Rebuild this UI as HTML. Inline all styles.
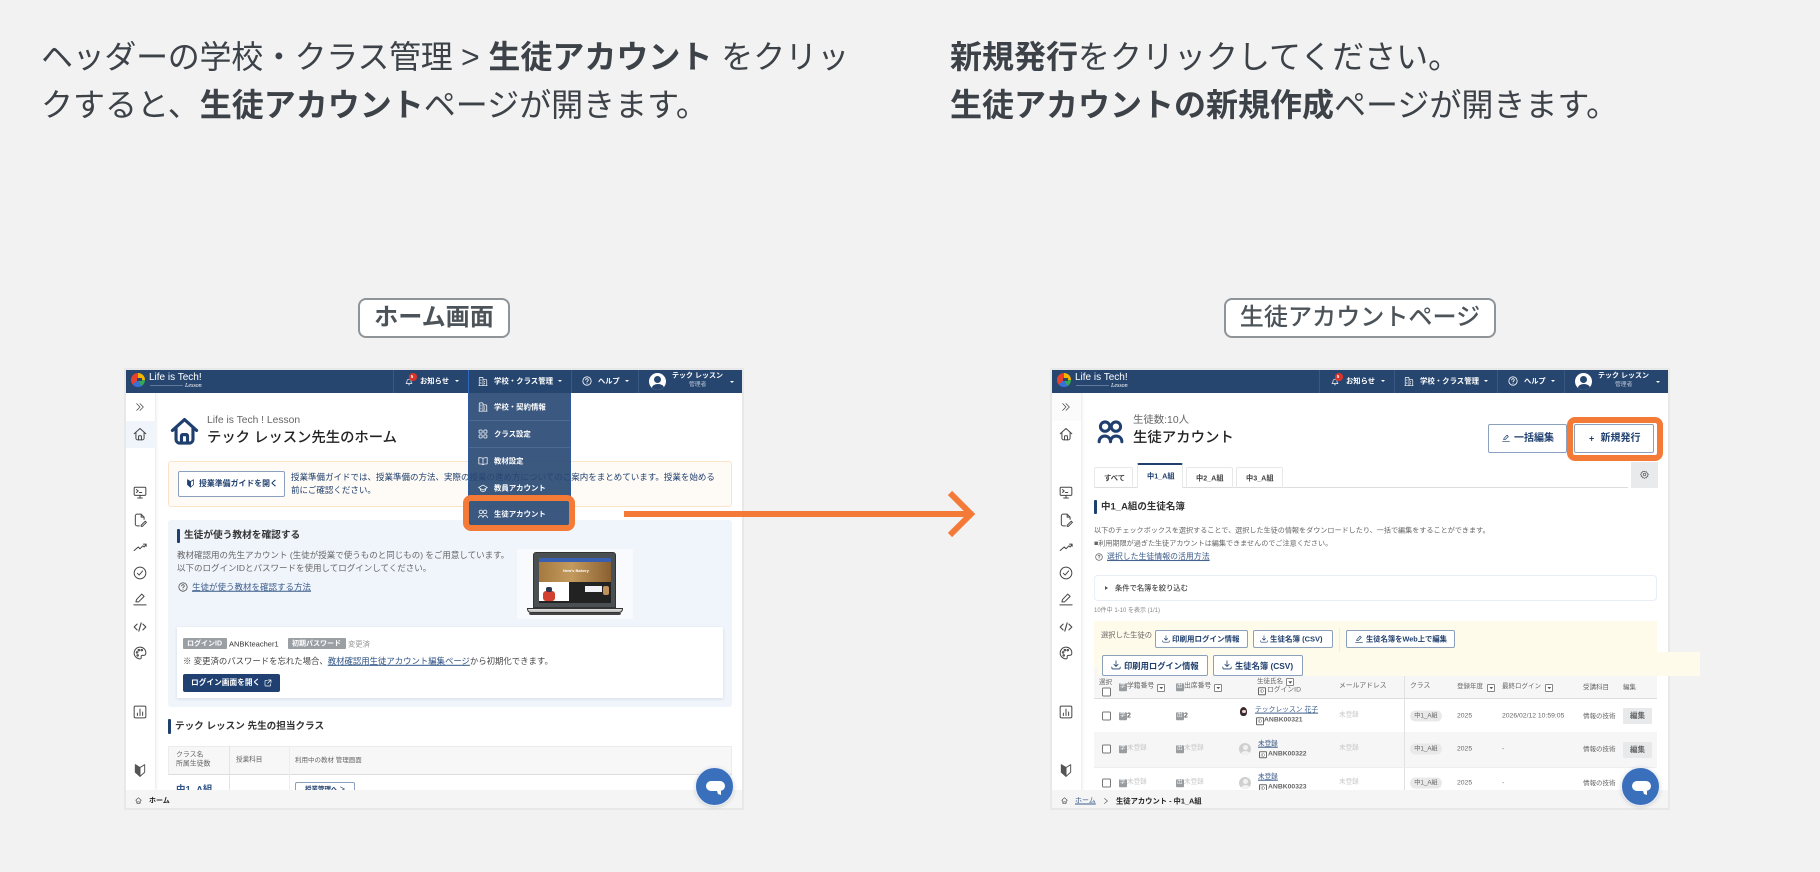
<!DOCTYPE html>
<html lang="ja"><head><meta charset="utf-8"><title>生徒アカウント</title>
<style>
*{box-sizing:border-box}
html,body{margin:0;padding:0}
body{width:1820px;height:872px;background:#f2f2f2;overflow:hidden;position:relative;font-family:"Liberation Sans","Noto Sans CJK JP",sans-serif;color:#3b4046}
.lead{position:absolute;font-size:32px;line-height:48px;white-space:nowrap;color:#3c4248;font-weight:400}
.lead b{font-weight:700}
.label{position:absolute;top:298px;height:40px;background:#fff;border:2px solid #8f9499;border-radius:8px;font-size:24.100px;font-weight:500;color:#4d5459;text-align:center;line-height:35px}
.frame{position:absolute;top:370px;width:616px;height:438px;outline:2px solid #e8e8e8;background:#fff}
.clip{position:absolute;inset:0;overflow:hidden;background:#fff}
.hd{position:absolute;left:0;top:0;width:616px;height:23px;background:#27466f}
.sep{position:absolute;top:0;width:1px;height:23px;background:#3a5881}
.side{position:absolute;left:0;top:23px;width:30px;height:397px;background:#fff;border-right:1px solid #f0f0f0;box-shadow:1px 0 2px #f2f2f2}
.bc{position:absolute;left:0;top:420px;width:616px;height:18px;background:#f5f5f5}
.t{position:absolute;white-space:nowrap;line-height:1;transform:translateY(-50%)}
.w{color:#fff}.b{font-weight:700}.n{color:#1f3f6e}.g{color:#666}.l{color:#c8c8c8}
.u{text-decoration:underline;text-underline-offset:1px;color:#3b5c8a}
svg.i{position:absolute;fill:none;stroke:currentColor;stroke-width:2;stroke-linecap:round;stroke-linejoin:round;overflow:visible}
.car{position:absolute;width:0;height:0;border:2px solid transparent;border-top:2.5px solid #fff;border-bottom:0}
.box{position:absolute;background:#fff;border:1px solid #8ba0bd;border-radius:2px}
.r{position:absolute}
.chat{position:absolute;left:569px;top:397px;width:39px;height:39px;border-radius:50%;background:#3a6fbc;box-shadow:0 1px 4px rgba(0,0,0,.15);border:.5px solid #e8eef8}
.chat:before{content:"";position:absolute;left:10px;top:13px;width:19px;height:10px;border-radius:5px;background:#fff}
.chat:after{content:"";position:absolute;left:21px;top:23px;border:1.500px solid transparent;border-top:3px solid #fff;border-right:3px solid #fff}
.dd{position:absolute;left:342px;top:23px;width:103px;height:134px;background:rgba(40,71,115,.91);border-left:1px solid #2f5a9c;border-right:1px solid #2f5a9c}
.ln{position:absolute;left:0;width:101px;height:1px;background:#4d6a92}
.or{position:absolute;border:6px solid #f47a38;border-radius:8px}
.k{position:absolute;width:7.500px;height:7.500px;background:#9a9da0;color:#fff;font-size:5.500px;line-height:7.500px;text-align:center;border-radius:1px;transform:translateY(-50%)}
.kb{background:#fff;color:#555;border:.7px solid #666;line-height:6px;font-size:4.500px}
.dn{position:absolute;width:8px;height:8px;border:.7px solid #888;border-radius:1px;background:#fff;transform:translateY(-50%)}
.dn:after{content:"";position:absolute;left:1.300px;top:2.200px;width:4px;height:2.500px;background:#555;clip-path:polygon(0 0,100% 0,50% 100%)}
.cb{position:absolute;left:50px;width:9px;height:9px;border:.8px solid #777;border-radius:1.500px;background:#fff;transform:translateY(-50%)}
.pill{position:absolute;left:358px;width:32px;height:11px;border-radius:6px;background:#e9e9e9;color:#666;font-size:6.200px;line-height:11px;text-align:center;transform:translateY(-50%)}
.ed{position:absolute;left:571px;width:29px;height:16px;background:#e8e9ea;color:#666;font-size:7.500px;font-weight:700;line-height:16px;text-align:center;border-radius:1px;transform:translateY(-50%)}
.av{position:absolute;left:187px;width:12px;height:12px;border-radius:50%;background:#cfcfcf;transform:translateY(-50%);overflow:hidden}
.av:before{content:"";position:absolute;left:3.500px;top:2px;width:5px;height:5px;border-radius:50%;background:#f2f2f2}
.av:after{content:"";position:absolute;left:1.500px;top:8px;width:9px;height:7px;border-radius:50%;background:#f2f2f2}
.fx{filter:blur(.3px)}
</style></head>
<body>
<svg width="0" height="0" style="position:absolute">
<symbol id="chev" viewBox="0 0 24 24"><path d="M4 4l8 8-8 8M12 4l8 8-8 8"/></symbol>
<symbol id="home" viewBox="0 0 24 24"><path d="M2 11.500L12 2.500l10 9M5 9v10a3 3 0 0 0 3 3h8a3 3 0 0 0 3-3V9M9.500 22v-6a1 1 0 0 1 1-1h3a1 1 0 0 1 1 1v6"/></symbol>
<symbol id="mon" viewBox="0 0 24 24"><rect x="2" y="3" width="20" height="14" rx="2"/><path d="M12 17v4M8 21.500h8M6 7l3 2.500-3 2.500M11 12h4"/></symbol>
<symbol id="file" viewBox="0 0 24 24"><path d="M14 2H7a3 3 0 0 0-3 3v14a3 3 0 0 0 3 3h4M14 2l5 5v4M14 2v5h5M14 21l7-7 2 2-7 7h-2z"/></symbol>
<symbol id="trend" viewBox="0 0 24 24"><path d="M2 18l7-6 3 3 5-5 2 2 3-4M18 7h4.500v4"/></symbol>
<symbol id="chk" viewBox="0 0 24 24"><circle cx="12" cy="12" r="10"/><path d="M7.500 12.500l3 3 6-7"/></symbol>
<symbol id="pen" viewBox="0 0 24 24"><path d="M5 17l1-4L15 3.500l4 4L9.500 17zM1.500 22h21"/></symbol>
<symbol id="code" viewBox="0 0 24 24"><path d="M7 7l-5 5 5 5M17 7l5 5-5 5M14 5l-4 14"/></symbol>
<symbol id="pal" viewBox="0 0 24 24"><path d="M12 2a10 10 0 0 0 0 20c2 0 2.500-1.500 2-3-.5-2 .5-3 2.500-3h2c2 0 3.500-1.500 3.500-4C22 6 17.500 2 12 2z"/><circle cx="7" cy="11" r="1.300"/><circle cx="10" cy="7" r="1.300"/><circle cx="15" cy="7" r="1.300"/><circle cx="8" cy="16" r="1.300"/></symbol>
<symbol id="chart" viewBox="0 0 24 24"><rect x="2" y="2" width="20" height="20" rx="2"/><path d="M7.500 18v-4M12 18V7M16.500 18v-6"/></symbol>
<symbol id="beg" viewBox="0 0 24 24"><path d="M12 7L4 2v13l8 7z" fill="currentColor"/><path d="M12 7l8-5v13l-8 7z"/></symbol>
<symbol id="bld" viewBox="0 0 24 24"><path d="M3 22V4a2 2 0 0 1 2-2h5a2 2 0 0 1 2 2v18M12 7h7a2 2 0 0 1 2 2v13M2 22h20M7 7v3M7 14v3M16 11v2M16 16v2"/></symbol>
<symbol id="grid" viewBox="0 0 24 24"><rect x="2.500" y="2.500" width="7.500" height="7.500" rx="2"/><rect x="14" y="2.500" width="7.500" height="7.500" rx="2"/><rect x="2.500" y="14" width="7.500" height="7.500" rx="2"/><rect x="14" y="14" width="7.500" height="7.500" rx="2"/></symbol>
<symbol id="book" viewBox="0 0 24 24"><path d="M12 6c-2-2-5-2-10-2v15c5 0 8 0 10 2 2-2 5-2 10-2V4c-5 0-8 0-10 2zM12 6v15"/></symbol>
<symbol id="cap" viewBox="0 0 24 24"><path d="M12 5L1.500 11 12 17l10.500-6zM6 14v4c3 3 9 3 12 0v-4"/></symbol>
<symbol id="ppl" viewBox="0 0 24 24"><circle cx="7" cy="7" r="4.300"/><circle cx="17" cy="7" r="4.300"/><path d="M1.500 21c0-7 10.500-7 10.500 0 0-7 10.500-7 10.500 0"/></symbol>
<symbol id="dl" viewBox="0 0 24 24"><path d="M12 2v13M7 10.500l5 5 5-5M2 17v2a2.500 2.500 0 0 0 2.500 2.500h15A2.500 2.500 0 0 0 22 19v-2"/></symbol>
<symbol id="q" viewBox="0 0 24 24"><circle cx="12" cy="12" r="10"/><path d="M9 9.500a3 3 0 1 1 4.500 2.500c-1 .7-1.500 1.200-1.500 2.500M12 17.500v.2"/></symbol>
<symbol id="gear" viewBox="0 0 24 24"><circle cx="12" cy="12" r="3.500"/><path d="M12 3l2 2 3-.5 1 3 3 1-.5 3 2 .5-2 2 .5 3-3 1-1 3-3-.5-2 2-2-2-3 .5-1-3-3-1 .5-3-2-2 2-2L3 7.500l3-1 1-3 3 .5z"/></symbol>
<symbol id="bell" viewBox="0 0 24 24"><path d="M3 18c2-1 3-3 3-7a6 6 0 0 1 12 0c0 4 1 6 3 7zM10 22h4"/></symbol>
<symbol id="ext" viewBox="0 0 24 24"><path d="M10 4H5a2 2 0 0 0-2 2v13a2 2 0 0 0 2 2h13a2 2 0 0 0 2-2v-5M13 3h8v8M21 3l-10 10"/></symbol>
</svg>

<div class="lead" style="left:41px;top:33px"><span style="letter-spacing:-.3px">ヘッダーの学校・クラス管理 &gt;</span> <b>生徒アカウント</b> をクリッ</div>
<div class="lead" style="left:41px;top:81px">クすると、<b>生徒アカウント</b>ページが開きます。</div>
<div class="lead" style="left:950px;top:33px"><b>新規発行</b>をクリックしてください。</div>
<div class="lead" style="left:950px;top:81px"><b>生徒アカウントの新規作成</b>ページが開きます。</div>

<div class="label" style="left:358px;width:152px;font-weight:700">ホーム画面</div>
<div class="label" style="left:1224px;width:272px">生徒アカウントページ</div>

<!-- FRAME 1 -->
<div class="frame fx" style="left:126px">
<div class="clip">
  <svg class="i n" style="left:44px;top:46px;width:29px;height:30px;stroke-width:2.600"><use href="#home"/></svg>
  <span class="t g" style="left:81px;top:51px;font-size:10.300px;font-weight:500">Life is Tech ! Lesson</span>
  <span class="t" style="left:81px;top:68px;font-size:14.350px;color:#222;font-weight:500">テック レッスン先生のホーム</span>

  <div class="r" style="left:42px;top:91px;width:564px;height:46px;background:#fefaf5;border:1px solid #fbe3c8;border-radius:3px"></div>
  <div class="box" style="left:52px;top:101px;width:107px;height:26px"></div>
  <svg class="i n" style="left:60px;top:109px;width:9px;height:9px"><use href="#beg"/></svg>
  <span class="t b n" style="left:73px;top:114px;font-size:7.900px">授業準備ガイドを開く</span>
  <span class="t n" style="left:165px;top:107px;font-size:8.500px">授業準備ガイドでは、授業準備の方法、実際の授業の進め方についてのご案内をまとめています。授業を始める</span>
  <span class="t n" style="left:165px;top:120px;font-size:8.500px">前にご確認ください。</span>

  <div class="r" style="left:42px;top:150px;width:564px;height:187px;background:#f0f5fb;border-radius:3px"></div>
  <div class="r" style="left:51px;top:159px;width:3px;height:14px;background:#1f3f6e;border-radius:1px"></div>
  <span class="t b" style="left:58px;top:166px;font-size:9.700px;color:#333">生徒が使う教材を確認する</span>
  <span class="t g" style="left:51px;top:185px;font-size:8.500px">教材確認用の先生アカウント (生徒が授業で使うものと同じもの) をご用意しています。</span>
  <span class="t g" style="left:51px;top:198px;font-size:8.500px">以下のログインIDとパスワードを使用してログインしてください。</span>
  <svg class="i" style="left:52px;top:212px;width:10px;height:10px;color:#555"><use href="#q"/></svg>
  <span class="t u" style="left:66px;top:217px;font-size:8.500px">生徒が使う教材を確認する方法</span>

  <div class="r" style="left:391px;top:179px;width:116px;height:70px;background:#f8fafe;border-radius:2px"></div>
  <div class="r" style="left:407px;top:182px;width:83px;height:56px;background:#4a4f52;border-radius:3px 3px 0 0;border:1px solid #333"></div>
  <div class="r" style="left:413px;top:188px;width:72px;height:45px;background:#222"></div>
  <div class="r" style="left:413px;top:188px;width:72px;height:4px;background:#3a5fb0"></div>
  <div class="r" style="left:413px;top:192px;width:72px;height:20px;background:linear-gradient(90deg,#a5793f,#c39a5e 45%,#8a6030)"></div>
  <span class="t b w" style="left:437px;top:201px;font-size:4px">New's Bakery</span>
  <div class="r" style="left:413px;top:212px;width:30px;height:19px;background:#fff"></div>
  <div class="r" style="left:417px;top:221px;width:12px;height:10px;background:#d2402f;border-radius:3px"></div>
  <div class="r" style="left:420px;top:217px;width:6px;height:5px;background:#2a3550;border-radius:2px"></div>
  <div class="r" style="left:459px;top:216px;width:17px;height:6px;background:#f2f2f6"></div>
  <div class="r" style="left:477px;top:216px;width:6px;height:9px;background:#c0935a;border-radius:2px"></div>
  <div class="r" style="left:401px;top:238px;width:96px;height:5px;background:linear-gradient(#e0e0e0,#b8b8b8);border:1px solid #333;border-radius:0 0 4px 4px"></div>
  <div class="r" style="left:403px;top:243px;width:92px;height:2px;background:#444;border-radius:0 0 4px 4px"></div>

  <div class="r" style="left:51px;top:257px;width:546px;height:71px;background:#fff;box-shadow:0 1px 3px rgba(60,80,120,.15)"></div>
  <div class="r" style="left:57px;top:268px;width:44px;height:11px;background:#9a9fa4;border-radius:1px"></div>
  <span class="t b w" style="left:61px;top:274px;font-size:7px">ログインID</span>
  <span class="t" style="left:103px;top:274px;font-size:7.500px;color:#333;font-weight:500">ANBKteacher1</span>
  <div class="r" style="left:162px;top:268px;width:58px;height:11px;background:#9a9fa4;border-radius:1px"></div>
  <span class="t b w" style="left:166px;top:274px;font-size:7px">初期パスワード</span>
  <span class="t" style="left:222px;top:274px;font-size:7.300px;color:#999">変更済</span>
  <span class="t" style="left:57px;top:291px;font-size:8.400px;color:#444">※ 変更済のパスワードを忘れた場合、<span class="u" style="color:#2f5385">教材確認用生徒アカウント編集ページ</span>から初期化できます。</span>
  <div class="r" style="left:57px;top:304px;width:97px;height:18px;background:#1f4070;border-radius:2px"></div>
  <span class="t b w" style="left:65px;top:313px;font-size:7.700px">ログイン画面を開く</span>
  <svg class="i w" style="left:138px;top:309px;width:8px;height:8px;color:#fff"><use href="#ext"/></svg>

  <div class="r" style="left:42px;top:349px;width:3px;height:15px;background:#1f3f6e;border-radius:1px"></div>
  <span class="t b" style="left:49px;top:357px;font-size:9.600px;color:#333">テック レッスン 先生の担当クラス</span>

  <div class="r" style="left:42px;top:376px;width:564px;height:29px;background:#f7f7f7;border:1px solid #ececec;border-bottom:1px solid #ddd"></div>
  <div class="r" style="left:103px;top:376px;width:1px;height:44px;background:#e4e4e4"></div>
  <div class="r" style="left:163px;top:376px;width:1px;height:44px;background:#eee"></div>
  <span class="t g" style="left:50px;top:386px;font-size:6.900px">クラス名</span>
  <span class="t g" style="left:50px;top:395px;font-size:6.900px">所属生徒数</span>
  <span class="t g" style="left:110px;top:391px;font-size:6.600px">授業科目</span>
  <span class="t g" style="left:169px;top:391px;font-size:6.500px">利用中の教材 管理画面</span>
  <span class="t b u" style="left:50px;top:419.500px;font-size:9.500px;color:#2f5385">中1_A組</span>
  <div class="box" style="left:169px;top:412px;width:60px;height:18px"></div>
  <span class="t b n" style="left:179px;top:420px;font-size:6.500px">授業管理へ ＞</span>

  <div class="side"></div>
  <div class="r" style="left:0;top:51px;width:30px;height:27px;background:#f0f5fb"></div>
  <div class="bc"></div>
  <span class="t b" style="left:23px;top:431px;font-size:7px;color:#222">ホーム</span>
  <svg class="i" style="left:9px;top:427px;width:7px;height:7px;color:#555"><use href="#home"/></svg>
</div>
<div class="hd"></div>
<div class="sep" style="left:267px"></div><div class="sep" style="left:342px;background:#2f6ac0"></div><div class="sep" style="left:445px;background:#2f5a9c"></div><div class="sep" style="left:512px"></div>
<div class="r" style="left:5px;top:3px;width:14px;height:14px;border-radius:50%;background:conic-gradient(#f4b400 0 90deg,#34a853 90deg 150deg,#3a6fd8 150deg 230deg,#e8402f 230deg 360deg)"></div>
<div class="r" style="left:11px;top:8px;width:5px;height:3px;background:#27466f"></div>
<span class="t w" style="left:23px;top:8px;font-size:10px;font-weight:500">Life is Tech!</span>
<div class="r" style="left:24px;top:15px;width:33px;height:1px;background:#65799a"></div>
<span class="t w" style="left:59px;top:15.500px;font-size:6px;font-style:italic;font-family:'Liberation Serif',serif">Lesson</span>
<svg class="i w" style="left:279px;top:7px;width:8px;height:9px;color:#fff"><use href="#bell"/></svg>
<div class="r" style="left:283px;top:3px;width:7.500px;height:7.500px;background:#d9342b;border-radius:50%"></div>
<span class="t b w" style="left:284.800px;top:6.700px;font-size:4.500px">5</span>
<span class="t b w" style="left:294px;top:11px;font-size:7.300px">お知らせ</span>
<div class="car" style="left:329px;top:10px"></div>
<svg class="i w" style="left:352px;top:6px;width:10px;height:11px;color:#fff;stroke-width:1.700"><use href="#bld"/></svg>
<span class="t b w" style="left:368px;top:11px;font-size:7.400px">学校・クラス管理</span>
<div class="car" style="left:432px;top:10px"></div>
<svg class="i w" style="left:456px;top:6px;width:10px;height:10px;color:#fff"><use href="#q"/></svg>
<span class="t b w" style="left:472px;top:11px;font-size:7.200px">ヘルプ</span>
<div class="car" style="left:499px;top:10px"></div>
<div class="r" style="left:523px;top:3px;width:17px;height:17px;border-radius:50%;background:#fff;overflow:hidden">
  <div class="r" style="left:5px;top:3px;width:7px;height:7px;border-radius:50%;background:#27466f"></div>
  <div class="r" style="left:2.500px;top:11px;width:12px;height:8px;border-radius:50%;background:#27466f"></div>
</div>
<span class="t b w" style="left:546px;top:6px;font-size:7px">テック レッスン</span>
<span class="t" style="left:563px;top:15.500px;font-size:5.800px;color:#b7c3d4">管理者</span>
<div class="car" style="left:604px;top:11px"></div>

<svg class="i" style="left:8.500px;top:32px;width:10px;height:10px;color:#444;stroke-width:1.800"><use href="#chev"/></svg>
<svg class="i" style="left:7px;top:57px;width:14px;height:14px;color:#444;stroke-width:1.700"><use href="#home"/></svg>
<svg class="i" style="left:7px;top:115px;width:14px;height:15px;color:#444;stroke-width:1.700"><use href="#mon"/></svg>
<svg class="i" style="left:7px;top:143px;width:14px;height:14px;color:#444;stroke-width:1.700"><use href="#file"/></svg>
<svg class="i" style="left:7px;top:170px;width:14px;height:14px;color:#444;stroke-width:1.700"><use href="#trend"/></svg>
<svg class="i" style="left:7px;top:196px;width:14px;height:14px;color:#444;stroke-width:1.700"><use href="#chk"/></svg>
<svg class="i" style="left:7px;top:222px;width:14px;height:14px;color:#444;stroke-width:1.700"><use href="#pen"/></svg>
<svg class="i" style="left:7px;top:250px;width:14px;height:14px;color:#444;stroke-width:1.900"><use href="#code"/></svg>
<svg class="i" style="left:7px;top:276px;width:14px;height:14px;color:#444;stroke-width:1.700"><use href="#pal"/></svg>
<svg class="i" style="left:7px;top:335px;width:14px;height:14px;color:#444;stroke-width:1.700"><use href="#chart"/></svg>
<svg class="i" style="left:7px;top:393px;width:14px;height:15px;color:#555;stroke-width:1.700"><use href="#beg"/></svg>

<div class="dd">
  <div class="ln" style="top:27px"></div><div class="ln" style="top:54px"></div>
</div>
<svg class="i w" style="left:352px;top:32px;width:10px;height:10px;color:#fff;stroke-width:1.800"><use href="#bld"/></svg>
<span class="t b w" style="left:368px;top:37px;font-size:7.400px">学校・契約情報</span>
<svg class="i w" style="left:352px;top:59px;width:10px;height:10px;color:#fff;stroke-width:1.800"><use href="#grid"/></svg>
<span class="t b w" style="left:368px;top:64px;font-size:7.400px">クラス設定</span>
<svg class="i w" style="left:352px;top:86px;width:10px;height:10px;color:#fff;stroke-width:1.800"><use href="#book"/></svg>
<span class="t b w" style="left:368px;top:91px;font-size:7.400px">教材設定</span>
<svg class="i w" style="left:352px;top:113px;width:10px;height:10px;color:#fff;stroke-width:1.800"><use href="#cap"/></svg>
<span class="t b w" style="left:368px;top:118px;font-size:7.400px">教員アカウント</span>
<svg class="i w" style="left:352px;top:139px;width:10px;height:10px;color:#fff;stroke-width:1.800"><use href="#ppl"/></svg>
<span class="t b w" style="left:368px;top:144px;font-size:7.400px">生徒アカウント</span>
<div class="or" style="left:337px;top:125px;width:112px;height:36px"></div>
<div class="chat"></div>
</div>

<!-- ARROW -->
<svg style="position:absolute;left:620px;top:485px;overflow:visible" width="360" height="60"><path d="M4 29H350M330 8l21 21-21 21" fill="none" stroke="#f47a38" stroke-width="6"/></svg>

<!-- FRAME 2 -->
<div class="frame fx" style="left:1052px">
<div class="clip">
  <svg class="i n" style="left:44px;top:49px;width:29px;height:26px;stroke-width:2.800"><use href="#ppl"/></svg>
  <span class="t g" style="left:81px;top:51px;font-size:10.400px">生徒数:10人</span>
  <span class="t" style="left:81px;top:68px;font-size:14.400px;color:#222;font-weight:500">生徒アカウント</span>
  <div class="box" style="left:436px;top:54px;width:79px;height:29px"></div>
  <svg class="i n" style="left:450px;top:64px;width:8px;height:8px"><use href="#pen"/></svg>
  <span class="t b n" style="left:462px;top:68.500px;font-size:10px">一括編集</span>
  <div class="box" style="left:522px;top:54px;width:80px;height:29px"></div>
  <span class="t b n" style="left:537px;top:68.500px;font-size:9px">+</span>
  <span class="t b n" style="left:548.500px;top:68.500px;font-size:10px">新規発行</span>

  <div class="r" style="left:42px;top:117px;width:534px;height:1px;background:#ddd"></div>
  <div class="r" style="left:42px;top:97px;width:39px;height:21px;border:1px solid #e8e8e8;border-bottom:0;border-radius:2px 2px 0 0"></div>
  <span class="t b" style="left:52px;top:107.500px;font-size:7.300px;color:#444">すべて</span>
  <div class="r" style="left:85px;top:93px;width:46px;height:25px;border:1px solid #e8e8e8;border-top:2px solid #1f3f6e;background:#fff;border-bottom:0;border-radius:2px 2px 0 0"></div>
  <span class="t b n" style="left:95px;top:106px;font-size:7.200px">中1_A組</span>
  <div class="r" style="left:134px;top:97px;width:47px;height:21px;border:1px solid #e8e8e8;border-bottom:0;border-radius:2px 2px 0 0"></div>
  <span class="t b" style="left:144px;top:107.500px;font-size:7.200px;color:#444">中2_A組</span>
  <div class="r" style="left:184px;top:97px;width:47px;height:21px;border:1px solid #e8e8e8;border-bottom:0;border-radius:2px 2px 0 0"></div>
  <span class="t b" style="left:194px;top:107.500px;font-size:7.200px;color:#444">中3_A組</span>
  <div class="r" style="left:579px;top:92px;width:27px;height:26px;background:#e8eaec"></div>
  <svg class="i" style="left:588px;top:100px;width:9px;height:9px;color:#555;stroke-width:1.800"><use href="#gear"/></svg>

  <div class="r" style="left:42px;top:130px;width:3px;height:14px;background:#1f3f6e;border-radius:1px"></div>
  <span class="t b" style="left:49px;top:137px;font-size:9.500px;color:#333">中1_A組の生徒名簿</span>
  <span class="t g" style="left:42px;top:160.700px;font-size:7.100px">以下のチェックボックスを選択することで、選択した生徒の情報をダウンロードしたり、一括で編集をすることができます。</span>
  <span class="t g" style="left:42px;top:174px;font-size:7.100px">■利用期限が過ぎた生徒アカウントは編集できませんのでご注意ください。</span>
  <svg class="i" style="left:43px;top:183px;width:8px;height:8px;color:#555"><use href="#q"/></svg>
  <span class="t u" style="left:55px;top:187px;font-size:7.900px">選択した生徒情報の活用方法</span>

  <div class="r" style="left:42px;top:205px;width:563px;height:26px;border:1px solid #e8eef7;border-radius:4px"></div>
  <div class="r" style="left:52.500px;top:216px;width:0;height:0;border:2.500px solid transparent;border-left:3px solid #555;border-right:0"></div>
  <span class="t" style="left:63px;top:218px;font-size:7.300px;color:#444;font-weight:500">条件で名簿を絞り込む</span>
  <span class="t" style="left:42px;top:240.700px;font-size:6px;color:#888">10件中 1-10 を表示 (1/1)</span>

  <div class="r" style="left:42px;top:251px;width:563px;height:47px;background:#fffbea"></div>
  <span class="t g" style="left:49px;top:265px;font-size:7.300px">選択した生徒の</span>
  <div class="box" style="left:103px;top:260px;width:93px;height:18px"></div>
  <svg class="i n" style="left:110px;top:265px;width:8px;height:8px"><use href="#dl"/></svg>
  <span class="t b n" style="left:120px;top:269px;font-size:7.500px">印刷用ログイン情報</span>
  <div class="box" style="left:201px;top:260px;width:80px;height:18px"></div>
  <svg class="i n" style="left:208px;top:265px;width:8px;height:8px"><use href="#dl"/></svg>
  <span class="t b n" style="left:218px;top:269px;font-size:7.500px">生徒名簿 (CSV)</span>
  <div class="r" style="left:287px;top:258px;width:1px;height:24px;background:#f1eed8"></div>
  <div class="box" style="left:294px;top:260px;width:109px;height:18px"></div>
  <svg class="i n" style="left:303px;top:265px;width:8px;height:8px"><use href="#pen"/></svg>
  <span class="t b n" style="left:314px;top:269px;font-size:7.300px">生徒名簿をWeb上で編集</span>

  <div class="r" style="left:42px;top:298px;width:563px;height:31px;background:#f6f6f6;border-bottom:1px solid #ddd"></div>
  <div class="r" style="left:42px;top:362px;width:563px;height:35px;background:#f6f6f6"></div>
  <div class="r" style="left:351.500px;top:306px;width:1px;height:114px;background:#e2e2e2"></div>
  <div class="r" style="left:42px;top:397px;width:563px;height:1px;background:#eee"></div>

  <span class="t g" style="left:47px;top:312.500px;font-size:6.500px">選択</span>
  <div class="cb" style="top:321.500px"></div>
  <div class="k" style="left:67px;top:317px">学</div><span class="t g" style="left:75px;top:317px;font-size:6.800px">学籍番号</span><div class="dn" style="left:105px;top:317.500px"></div>
  <div class="k" style="left:124px;top:317px">出</div><span class="t g" style="left:132px;top:317px;font-size:6.800px">出席番号</span><div class="dn" style="left:162px;top:317.500px"></div>
  <span class="t g" style="left:205px;top:312px;font-size:6.500px">生徒氏名</span><div class="dn" style="left:234px;top:312px"></div>
  <div class="k kb" style="left:206px;top:321px">ID</div><span class="t g" style="left:215px;top:321px;font-size:6.800px">ログインID</span>
  <span class="t g" style="left:287px;top:317px;font-size:6.800px">メールアドレス</span>
  <span class="t g" style="left:358px;top:317px;font-size:6.800px">クラス</span>
  <span class="t g" style="left:405px;top:317px;font-size:6.500px">登録年度</span><div class="dn" style="left:435px;top:317.500px"></div>
  <span class="t g" style="left:450px;top:317px;font-size:6.500px">最終ログイン</span><div class="dn" style="left:493px;top:317.500px"></div>
  <span class="t g" style="left:531px;top:318px;font-size:6.500px">受講科目</span>
  <span class="t g" style="left:571px;top:318px;font-size:6.500px">編集</span>

  <!-- row1 -->
  <div class="cb" style="top:346px"></div>
  <div class="k" style="left:67px;top:346px">学</div><span class="t b g" style="left:75px;top:346px;font-size:7px">2</span>
  <div class="k" style="left:124px;top:346px">出</div><span class="t b g" style="left:132px;top:346px;font-size:7px">2</span>
  <div class="r" style="left:188px;top:337px;width:7px;height:9px;background:#3a2a30;border-radius:50% 50% 40% 40%"></div>
  <div class="r" style="left:189.500px;top:339.500px;width:4px;height:3.500px;background:#f3d9cf;border-radius:50%"></div>
  <span class="t u" style="left:203px;top:341px;font-size:6.800px">テックレッスン 花子</span>
  <div class="k kb" style="left:204px;top:351px">ID</div><span class="t b g" style="left:212px;top:351px;font-size:6.800px">ANBK00321</span>
  <span class="t l" style="left:287px;top:346px;font-size:6.600px">未登録</span>
  <div class="pill" style="top:346px">中1_A組</div>
  <span class="t g" style="left:405px;top:346.500px;font-size:6.800px">2025</span>
  <span class="t g" style="left:450px;top:346.500px;font-size:6.800px">2026/02/12 10:59:05</span>
  <span class="t g" style="left:531px;top:346.500px;font-size:6.500px">情報の技術</span>
  <div class="ed" style="top:346px">編集</div>
  <!-- row2 -->
  <div class="cb" style="top:379px"></div>
  <div class="k" style="left:67px;top:379px">学</div><span class="t l" style="left:75px;top:379px;font-size:6.600px">未登録</span>
  <div class="k" style="left:124px;top:379px">出</div><span class="t l" style="left:132px;top:379px;font-size:6.600px">未登録</span>
  <div class="av" style="top:379px"></div>
  <span class="t u" style="left:206px;top:375px;font-size:6.600px">未登録</span>
  <div class="k kb" style="left:207px;top:384.500px">ID</div><span class="t b g" style="left:216px;top:384.500px;font-size:6.800px">ANBK00322</span>
  <span class="t l" style="left:287px;top:379px;font-size:6.600px">未登録</span>
  <div class="pill" style="top:379px">中1_A組</div>
  <span class="t g" style="left:405px;top:380px;font-size:6.800px">2025</span>
  <span class="t g" style="left:450px;top:380px;font-size:6.800px">-</span>
  <span class="t g" style="left:531px;top:380px;font-size:6.500px">情報の技術</span>
  <div class="ed" style="top:380px">編集</div>
  <!-- row3 -->
  <div class="cb" style="top:413px"></div>
  <div class="k" style="left:67px;top:413px">学</div><span class="t l" style="left:75px;top:413px;font-size:6.600px">未登録</span>
  <div class="k" style="left:124px;top:413px">出</div><span class="t l" style="left:132px;top:413px;font-size:6.600px">未登録</span>
  <div class="av" style="top:413px"></div>
  <span class="t u" style="left:206px;top:408px;font-size:6.600px">未登録</span>
  <div class="k kb" style="left:207px;top:418px">ID</div><span class="t b g" style="left:216px;top:418px;font-size:6.800px">ANBK00323</span>
  <span class="t l" style="left:287px;top:413px;font-size:6.600px">未登録</span>
  <div class="pill" style="top:413px">中1_A組</div>
  <span class="t g" style="left:405px;top:413.500px;font-size:6.800px">2025</span>
  <span class="t g" style="left:450px;top:413.500px;font-size:6.800px">-</span>
  <span class="t g" style="left:531px;top:413.500px;font-size:6.500px">情報の技術</span>

  <div class="side"></div>
  <div class="r" style="left:0;top:23px;width:30px;height:28px;background:#fbfbfb;border-right:1px solid #f0f0f0"></div>
  <div class="bc"></div>
  <svg class="i" style="left:9px;top:427px;width:7px;height:7px;color:#555"><use href="#home"/></svg>
  <span class="t u" style="left:23px;top:431px;font-size:7px">ホーム</span>
  <svg class="i" viewBox="0 0 24 24" style="left:51px;top:428px;width:6px;height:6px;color:#555;stroke-width:2.500"><path d="M6 2l12 10-12 10"/></svg>
  <span class="t b" style="left:64px;top:431px;font-size:7.300px;color:#222">生徒アカウント - 中1_A組</span>
</div>
<div class="hd"></div>
<div class="sep" style="left:267px"></div><div class="sep" style="left:342px"></div><div class="sep" style="left:445px"></div><div class="sep" style="left:512px"></div>
<div class="r" style="left:5px;top:3px;width:14px;height:14px;border-radius:50%;background:conic-gradient(#f4b400 0 90deg,#34a853 90deg 150deg,#3a6fd8 150deg 230deg,#e8402f 230deg 360deg)"></div>
<div class="r" style="left:11px;top:8px;width:5px;height:3px;background:#27466f"></div>
<span class="t w" style="left:23px;top:8px;font-size:10px;font-weight:500">Life is Tech!</span>
<div class="r" style="left:24px;top:15px;width:33px;height:1px;background:#65799a"></div>
<span class="t w" style="left:59px;top:15.500px;font-size:6px;font-style:italic;font-family:'Liberation Serif',serif">Lesson</span>
<svg class="i w" style="left:279px;top:7px;width:8px;height:9px;color:#fff"><use href="#bell"/></svg>
<div class="r" style="left:283px;top:3px;width:7.500px;height:7.500px;background:#d9342b;border-radius:50%"></div>
<span class="t b w" style="left:284.800px;top:6.700px;font-size:4.500px">5</span>
<span class="t b w" style="left:294px;top:11px;font-size:7.300px">お知らせ</span>
<div class="car" style="left:329px;top:10px"></div>
<svg class="i w" style="left:352px;top:6px;width:10px;height:11px;color:#fff;stroke-width:1.700"><use href="#bld"/></svg>
<span class="t b w" style="left:368px;top:11px;font-size:7.400px">学校・クラス管理</span>
<div class="car" style="left:432px;top:10px"></div>
<svg class="i w" style="left:456px;top:6px;width:10px;height:10px;color:#fff"><use href="#q"/></svg>
<span class="t b w" style="left:472px;top:11px;font-size:7.200px">ヘルプ</span>
<div class="car" style="left:499px;top:10px"></div>
<div class="r" style="left:523px;top:3px;width:17px;height:17px;border-radius:50%;background:#fff;overflow:hidden">
  <div class="r" style="left:5px;top:3px;width:7px;height:7px;border-radius:50%;background:#27466f"></div>
  <div class="r" style="left:2.500px;top:11px;width:12px;height:8px;border-radius:50%;background:#27466f"></div>
</div>
<span class="t b w" style="left:546px;top:6px;font-size:7px">テック レッスン</span>
<span class="t" style="left:563px;top:15.500px;font-size:5.800px;color:#b7c3d4">管理者</span>
<div class="car" style="left:604px;top:11px"></div>

<svg class="i" style="left:8.500px;top:32px;width:10px;height:10px;color:#444;stroke-width:1.800"><use href="#chev"/></svg>
<svg class="i" style="left:7px;top:57px;width:14px;height:14px;color:#444;stroke-width:1.700"><use href="#home"/></svg>
<svg class="i" style="left:7px;top:115px;width:14px;height:15px;color:#444;stroke-width:1.700"><use href="#mon"/></svg>
<svg class="i" style="left:7px;top:143px;width:14px;height:14px;color:#444;stroke-width:1.700"><use href="#file"/></svg>
<svg class="i" style="left:7px;top:170px;width:14px;height:14px;color:#444;stroke-width:1.700"><use href="#trend"/></svg>
<svg class="i" style="left:7px;top:196px;width:14px;height:14px;color:#444;stroke-width:1.700"><use href="#chk"/></svg>
<svg class="i" style="left:7px;top:222px;width:14px;height:14px;color:#444;stroke-width:1.700"><use href="#pen"/></svg>
<svg class="i" style="left:7px;top:250px;width:14px;height:14px;color:#444;stroke-width:1.900"><use href="#code"/></svg>
<svg class="i" style="left:7px;top:276px;width:14px;height:14px;color:#444;stroke-width:1.700"><use href="#pal"/></svg>
<svg class="i" style="left:7px;top:335px;width:14px;height:14px;color:#444;stroke-width:1.700"><use href="#chart"/></svg>
<svg class="i" style="left:7px;top:393px;width:14px;height:15px;color:#555;stroke-width:1.700"><use href="#beg"/></svg>

<div class="r" style="left:46px;top:282px;width:602px;height:24px;background:#fffbea"></div>
<div class="box" style="left:50px;top:285px;width:106px;height:21px"></div>
<svg class="i n" style="left:59px;top:290px;width:10px;height:10px"><use href="#dl"/></svg>
<span class="t b n" style="left:72px;top:295.500px;font-size:8.300px">印刷用ログイン情報</span>
<div class="box" style="left:161px;top:285px;width:90px;height:21px"></div>
<svg class="i n" style="left:170px;top:290px;width:10px;height:10px"><use href="#dl"/></svg>
<span class="t b n" style="left:183px;top:295.500px;font-size:8.300px">生徒名簿 (CSV)</span>

<div class="or" style="left:515px;top:47px;width:96px;height:44px"></div>
<div class="chat"></div>
</div>
</body></html>
